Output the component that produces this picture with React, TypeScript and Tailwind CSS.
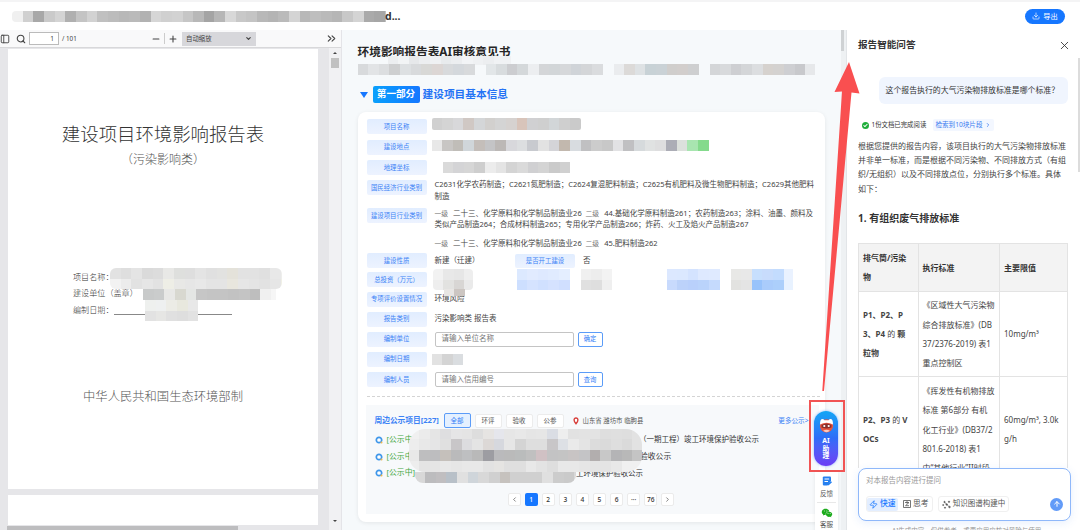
import { Check, ChevronRight, ChevronDown, ChevronsRight, ArrowUp, Download, Minus, PanelLeft, Plus, Search, X, Zap } from "lucide-react";
import { AiFillWechat } from "react-icons/ai";
import type { ReactNode } from "react";

// Cada franja es una lista de colores; "-" deja la celda transparente.
function Mosaic({ rows, className = "" }: { rows: string[]; className?: string }) {
  return (
    <div className={`flex flex-col overflow-hidden ${className}`}>
      {rows.map((row, i) => (
        <div key={i} className="flex flex-1">
          {row.split(" ").map((c, j) => (
            <span key={j} className="w-[10.67px] shrink-0" style={{ background: c === "-" ? "transparent" : `#${c}` }} />
          ))}
        </div>
      ))}
    </div>
  );
}

function TopBar() {
  return (
    <header className="flex h-[30px] shrink-0 items-center justify-between border-t-2 border-[#f4f4f5] bg-white pr-[15px] pl-[12px]">
      <div className="flex items-center">
        <Mosaic
          className="h-[11px] w-[374px] rounded-l"
          rows={["f0f0f0 d0d0d0 a8a8a8 cacaca d4d4d4 b0b0b0 c4c4c4 d2d2d2 c0c0c0 bcbcbc b8b8b8 bababa b2b2b2 d6d6d6 d0d0d0 d2d2d2 c6c6c6 b8b8b8 a4a4a4 b6b6b6 d8d8d8 c8c8c8 c4c4c4 b8b8b8 b4b4b4 bababa d4d4d4 b8b8b8 bebebe bababa b6b6b6 c8c8c8 d4d4d4 aaaaaa a6a6a6 c0c0c0"]}
        />
        <span className="-ml-px text-[10.5px] leading-[11px] font-bold">d...</span>
      </div>
      <button className="flex h-[15px] w-[40px] items-center justify-center gap-[3px] rounded-full bg-[#1677ff] text-[7.3px] text-white">
        <Download size={8} />
        导出
      </button>
    </header>
  );
}

function PdfViewer() {
  return (
    <section className="flex w-[342px] shrink-0 flex-col border-r border-[#e4e4e8]">
      <div className="flex h-[18px] shrink-0 items-center border-b border-[#d8d8da] bg-[#f9f9fa] text-[#444]">
        <PanelLeft size={10} strokeWidth={2.2} />
        <Search size={10} className="ml-[6px]" strokeWidth={2.6} />
        <span className="ml-[3px] flex h-[13px] w-[30px] items-center justify-end border border-[#bbb] bg-white pr-1 text-[6.5px]">1</span>
        <span className="ml-[3px] w-[89px] text-[6.3px]">/ 101</span>
        <Minus size={10} strokeWidth={2.6} />
        <span className="mx-[3px] h-[11px] w-px bg-[#ccc]" />
        <Plus size={10} strokeWidth={2.6} />
        <span className="ml-[4px] flex h-[14px] w-[74px] items-center justify-between bg-[#d7d7db] pr-1 pl-1 text-[6.4px]">
          自动缩放
          <ChevronDown size={7} strokeWidth={4} />
        </span>
        <ChevronsRight size={13} className="mr-[3px] ml-auto" />
      </div>
      <div className="flex min-h-0 flex-1">
        <div className="flex w-[329px] flex-col bg-[#e6e6e9]">
          <div className="mx-[8px] mt-[1px] flex h-[440px] w-[310px] shrink-0 flex-col bg-white font-light text-[#333]">
            <h1 className="mt-[71px] text-center text-[18.4px] leading-[28px]">建设项目环境影响报告表</h1>
            <p className="mt-[3px] text-center text-[12px] leading-[18px] text-[#555]">（污染影响类）</p>
            <div className="relative mt-[100px] ml-[65px] text-[8.1px] leading-[16.3px]">
              <p>项目名称：</p>
              <p>建设单位（盖章）</p>
              <p className="flex">
                编制日期：
                <span className="mb-[3px] ml-px w-[118px] border-b border-[#888]" />
              </p>
              <Mosaic
                className="absolute top-[-1px] left-[37px] h-[21px] w-[172px] rounded-md"
                rows={[
                  "e2e2e2 dedede e4e4e4 dadada dcdcdc e8e8e6 dedfdd dedede e4e4e4 e0e0e0 e2e2e0 e4e2da e2e2e2 e2e2e2 e0e0e0 e8e8e8 eeeeec",
                  "f2f2f2 ececec e2e2e2 e6e6e6 e2e2e2 eeeee6 e8e8e6 e6e6e6 e8e8e8 e4e4e4 e4e4e4 e8e6de e6e6e6 e4e4e4 e2e2e2 e6e6e6 f0f0e6",
                ]}
              />
              <Mosaic className="absolute top-[20px] left-[70px] h-[11px] w-[133px]" rows={["c8caca cacccc e8e8e6 d8d8d0 e4e6e4 c6c6c6 c4c4c4 c4c4c4 c2c2c2 c4c4c4 bebebe f0f0f0 f6f6f6"]} />
              <Mosaic className="absolute top-[31px] left-[72px] h-[21px] w-[54px]" rows={["eef0ee eef0f0 ecece6 e8e8de e8e8e8", "e2e2e2 e6e6e4 e0e0e0 dedede e2e2e2"]} />
            </div>
            <p className="mt-[69.5px] text-center text-[12.3px] leading-[20px] text-[#555]">中华人民共和国生态环境部制</p>
          </div>
          <div className="mx-[8px] mt-[6px] h-[31px] w-[310px] bg-white" />
          <div className="mt-px ml-[7px] h-[4px] w-[231px] bg-[#bdbdbf]" />
        </div>
        <div className="flex flex-1 flex-col items-center bg-[#f1f1f3] py-[4px]">
          <span className="border-x-2 border-b-2 border-x-transparent border-b-[#444]" />
          <span className="mt-[4px] h-[10px] w-[8px] bg-[#c1c1c1]" />
          <span className="mt-auto mb-[4px] border-x-2 border-t-2 border-x-transparent border-t-[#444]" />
        </div>
      </div>
    </section>
  );
}

function Label({ children, className = "h-[15px]" }: { children: ReactNode; className?: string }) {
  return (
    <span className={`flex w-[60px] shrink-0 items-center justify-center rounded-[2px] bg-linear-to-b from-[#e1edff] to-[#edf3ff] text-[6.4px] text-[#3b82f6] ${className}`}>
      {children}
    </span>
  );
}

function Row({ label, h, align = "items-center", children }: { label: string; h: string; align?: string; children?: ReactNode }) {
  return (
    <div className={`flex shrink-0 ${align} ${h}`}>
      <Label>{label}</Label>
      <div className="ml-[8px] text-[7.5px] whitespace-nowrap text-[#444]">{children}</div>
    </div>
  );
}

function Field({ placeholder, action }: { placeholder: string; action: string }) {
  return (
    <div className="flex items-center gap-[4px]">
      <span className="flex h-[15px] w-[139px] items-center rounded-[2px] border border-[#c4c4c4] pl-[6px] text-[7.5px] text-[#777]">{placeholder}</span>
      <span className="flex h-[15px] w-[25px] items-center justify-center rounded-[2px] border border-[#5b9cf8] text-[6.3px] text-[#2f7cf6]">{action}</span>
    </div>
  );
}

function Level({ children }: { children: string }) {
  return <span className="mr-[5px] text-[6.8px] text-[#777]">{children}</span>;
}

const TABS = ["环评", "验收", "公参"];
const PAGES = ["2", "3", "4", "5", "6", "···", "76"];
const NOTICES = [
  { text: "（一期工程）竣工环境保护验收公示", pos: "ml-[224px] text-[7.5px]" },
  { text: "验收公示", pos: "ml-[225px]" },
  { text: "工环境保护验收公示", pos: "ml-[161px] text-[7.45px]" },
];

function NearbyProjects() {
  return (
    <div className="relative mt-[8px] ml-[-1px] h-[109px] w-[453px] bg-[#f7f9fb] pt-[8.5px] pl-[9px]">
      <div className="flex h-[15px] items-center text-[6.5px] text-[#555]">
        <span className="w-[69px] text-[7.7px] font-bold whitespace-nowrap text-[#3b82f6]">周边公示项目[227]</span>
        <span className="flex h-[15px] w-[27px] items-center justify-center rounded-[2px] border border-[#5b9cf8] bg-[#e4f0ff] text-[#2f7cf6]">全部</span>
        {TABS.map((t) => (
          <span key={t} className="ml-[4px] flex h-[14px] w-[27px] items-center justify-center rounded-[2px] border border-[#ececec] bg-white">
            {t}
          </span>
        ))}
        <svg width="6" height="8" viewBox="0 0 6 8" className="ml-[9px]">
          <path d="M3 1A1.900 1.900 0 0 1 4.900 3C4.900 4.500 3 6.700 3 6.700S1.100 4.500 1.100 3A1.900 1.900 0 0 1 3 1Z" fill="#fff" stroke="#d8403c" strokeWidth="1.400" />
        </svg>
        <span className="ml-[4px] text-[6.4px] whitespace-nowrap">山东省 潍坊市 临朐县</span>
        <span className="mr-[10px] ml-auto text-[6.6px] text-[#3b82f6]">更多公示&gt;</span>
      </div>
      <div className="mt-[3.5px] flex flex-col text-[7.8px]">
        {NOTICES.map(({ text, pos }) => (
          <div key={text} className="flex h-[16.7px] items-center whitespace-nowrap">
            <svg width="8" height="8" viewBox="0 0 8 8">
              <circle cx="4" cy="4" r="2.700" fill="#fff" stroke="#3f97ea" strokeWidth="1.700" />
              <circle cx="6.500" cy="6.500" r="1" fill="#f0b84a" />
            </svg>
            <span className="ml-[4px] text-[#43a843]">[公示中]</span>
            <span className={pos}>{text}</span>
          </div>
        ))}
      </div>
      <Mosaic
        className="absolute top-[24px] left-[43px] h-[43px] w-[233px] rounded-2xl"
        rows={[
          "f0f0f0 ebebeb e5e5e5 dedee0 e5e5e6 e4e4e4 dddddd e6e4e2 e5e6ec e6e6e6 e8e8e8 e5e5e5 e6e6e6 dadde4 eeeeee e2e2e2 e3e3e3 e3e3e3 dedede dfdfdf dedede e2e2e2",
          "ededed e8e8e8 e5e5e6 e0e0e0 c8c6c8 dcdcdf e4e4e4 dcd8d6 d6d8de e6e6e6 d4d4d4 dedede dedede c8c6c8 dde0e5 eaeaea e4e4e4 dcdcdc dadada dedede dadada e2e2e2",
          "e8e8e8 bebebf bdbdbf c5c0bb bababb bebfc1 b9b9b9 9d9da2 bababc bababa babcbc c0c0c0 d0c1c4 c3c3c4 c4c4c4 c8c4c4 c4c4c6 b2aeae c8c8c8 b4b4b6 b8b8b8 c4c4c4",
          "ededed e4e4e4 e5e5e5 e8e8e8 e6e6e6 e8e8e8 e8e8e8 e2e2e2 e5e4e2 dfdfdf dfdfdf e8e8e8 e3e3e3 dedede e8e8e8 e8e8e8 e6e6e6 e4e4e4 e4e4e4 e8e8e8 f0f0f0 f0f0f0",
        ]}
      />
      <Mosaic className="absolute top-[67px] left-[49px] h-[11px] w-[161px] rounded-b-lg" rows={["d8d8d8 bcbcbe c0bec0 b8c0c8 e0e0e0 cfd5da d8d8d8 d0d0d0 c6c2be d0d0d0 d0d0d0 d0d0d0 e0e0e0 cccccc cacaca d8d8d8"]} />
      <div className="mt-[11.5px] ml-[133px] flex h-[13px] gap-[4.1px] text-[6.6px] font-medium">
        <span className="flex w-[13px] items-center justify-center rounded-[2px] border border-[#ebebeb] bg-white">
          <ChevronRight size={7} className="rotate-180" />
        </span>
        <span className="flex w-[13px] items-center justify-center rounded-[2px] bg-[#1677ff] text-white">1</span>
        {PAGES.map((p) => (
          <span key={p} className="flex w-[13px] items-center justify-center rounded-[2px] border border-[#ebebeb] bg-white">
            {p}
          </span>
        ))}
        <span className="flex w-[13px] items-center justify-center rounded-[2px] border border-[#ebebeb] bg-white">
          <ChevronRight size={7} />
        </span>
      </div>
    </div>
  );
}

function Review() {
  return (
    <section className="flex w-[499px] shrink-0 flex-col bg-[#f6f9fb] pl-[15.5px]">
      <div className="relative mt-[12px] h-[34px]">
        <h2 className="text-[11.7px] leading-[18px] font-bold whitespace-nowrap text-[#262626]">环境影响报告表AI审核意见书</h2>
        <Mosaic className="absolute top-[14px] left-[30px] h-[9px] w-[123px]" rows={["eceef0 f2f4f5 e6e8ea eceef0 eff1f3 e8ebed eceef0 f2f4f6 eff1f3 eceef0 f0f2f4 f0f2f4"]} />
        <div className="absolute top-[22px] left-0 flex">
          <Mosaic className="h-[11px] w-[117px]" rows={["d8dadc e2e4e6 dcdee0 cecfd0 dde0e2 d8dadc d8d8d6 dcd6d4 d8dadc d4d8dc d8dadc"]} />
          <Mosaic className="ml-[11px] h-[11px] w-[117px]" rows={["e2e6e8 d8dcde cccdd0 d4d8da eceef0 d4d6d8 d2d6d8 d6d8da d0d4d8 d4d6d8 dadcde"]} />
          <Mosaic className="ml-[11px] h-[11px] w-[85px]" rows={["eaecee dcdad8 dee2e4 c8d2d6 cad2d6 d0cecc d2cecc cecfd0"]} />
          <Mosaic className="ml-[11px] h-[11px] w-[105px]" rows={["d4d6d8 d8dadc cecfd2 d4d6d8 dcdee0 d6d2ce d4d2d0 cecfd2 c8c9cc e6e8ea"]} />
        </div>
      </div>
      <div className="mt-[10px] flex h-[17px] items-center">
        <span className="ml-[2.5px] border-x-[4px] border-t-[6px] border-x-transparent border-t-[#1677ff]" />
        <span className="ml-[4.5px] flex h-[17px] w-[47px] items-center justify-center rounded-[2px] bg-linear-to-r from-[#0ba0fc] to-[#1677ff] text-[9.6px] font-bold text-white">第一部分</span>
        <span className="ml-[3px] text-[10.7px] font-bold text-[#2473f5]">建设项目基本信息</span>
      </div>
      <div className="mt-[9px] flex h-[410px] w-[467px] flex-col rounded-lg bg-white pt-[4.5px] pl-[9px] shadow-[0_1px_4px_rgba(0,0,0,0.08)]">
        <Row label="项目名称" h="h-[20.5px]">
          <Mosaic className="mb-[6px] ml-[-3px] h-[12px] w-[149px] rounded-xs" rows={["d0d0d0 d4d4d4 d8d8da d0c8c4 d4d6d8 d2d0ce d4d4d4 d6d2d0 d8c4ba d0d0d2 cfcfcf d2d6d8 cfcfcf cacaca"]} />
        </Row>
        <Row label="建设地点" h="h-[20.5px]">
          <Mosaic className="mb-[3px] ml-[-3px] h-[11px] w-[278px]" rows={["e8e8e8 c8c6c4 c0bdb8 d0d6da c4beba c4c4c6 bcb8b6 d8d8dc dcdee0 c8cacf e2e2e2 d4d4d8 c2b8ae d8dce0 c0c0c2 cccccc c8c8c8 e2e2e4 c0c0c2 d6dadc e0e2e2 dededf acadb6 dce0dc a8e5b0 84da8c"]} />
        </Row>
        <Row label="地理坐标" h="h-[20px]">
          <Mosaic className="ml-[8px] h-[11px] w-[128px]" rows={["dadada d4d4d6 d6d6d6 cecece ececec e4e4e4 d4d4d4 dadada d0d0d2 d4d4d4 cacaca d0d0d0"]} />
        </Row>
        <Row label="国民经济行业类别" h="h-[28.5px]" align="items-start pt-[2.5px]">
          <p className="-mt-[2px] leading-[12px]">C2631化学农药制造；C2621氮肥制造；C2624复混肥料制造；C2625有机肥料及微生物肥料制造；C2629其他肥料</p>
          <p className="leading-[12px]">制造</p>
        </Row>
        <Row label="建设项目行业类别" h="h-[45px]" align="items-start pt-[2px]">
          <p className="-mt-[0.5px] leading-[11.5px]">
            <Level>一级</Level>二十三、化学原料和化学制品制造业26&nbsp; <Level>二级</Level>44.基础化学原料制造261；农药制造263；涂料、油墨、颜料及
          </p>
          <p className="leading-[11.5px]">类似产品制造264；合成材料制造265；专用化学产品制造266；炸药、火工及焰火产品制造267</p>
          <p className="mt-[7px] leading-[11px]">
            <Level>一级</Level>二十三、化学原料和化学制品制造业26&nbsp; <Level>二级</Level>45.肥料制造262
          </p>
        </Row>
        <Row label="建设性质" h="h-[19px]">
          <div className="flex items-center">
            <span className="w-[80.5px]">新建（迁建）</span>
            <Label className="h-[14px]">是否开工建设</Label>
            <span className="ml-[8px]">否</span>
          </div>
        </Row>
        <Row label="总投资（万元）" h="h-[19px]">
          <div className="relative z-10 flex h-[21px] w-[360px] items-center">
            <Mosaic className="ml-[-2px] h-[21px] w-[40px] rounded-sm" rows={["f2f2f2 e8e8e8 e6e6e6 eeeeee", "eeeeee e2e2e0 d8d6d4 eaeaea"]} />
            <Mosaic className="ml-[44px] h-[21px] w-[54px]" rows={["dce9ff e1ebff dee9ff e0ebff e4eeff", "cddfff d5e3ff d0e0ff d5e2ff d0dfff"]} />
            <Mosaic className="ml-[10px] h-[21px] w-[32px]" rows={["f0f0f0 ededed f3f3f3", "e0e0e0 dedede efefef"]} />
            <Mosaic className="ml-[54px] h-[21px] w-[54px]" rows={["dce8ff dbe8ff d4e3ff dee9ff dfeaff", "c8dafd bcd2fa b9d0fb bad3fb c5dafd"]} />
            <Mosaic className="ml-[10px] h-[21px] w-[62px]" rows={["e8e8e6 e8e8e8 c7dffd c8dcfc c3dcfe eaf2ff", "e2e2e0 e4e4e4 98c3fb aaccfb accffb e8f2ff"]} />
            <Mosaic className="absolute top-[20px] left-[9px] h-[7px] w-[22px]" rows={["e8e6e4 ccc6c2"]} />
          </div>
        </Row>
        <Row label="专项评价设置情况" h="h-[20px]">环境风险</Row>
        <Row label="报告类别" h="h-[20px]">污染影响类 报告表</Row>
        <Row label="编制单位" h="h-[20px]">
          <Field placeholder="请输入单位名称" action="确定" />
        </Row>
        <Row label="编制日期" h="h-[20.5px]">
          <Mosaic className="ml-[-3px] h-[11px] w-[32px]" rows={["e2e2e2 d4d4d4 dadde0"]} />
        </Row>
        <Row label="编制人员" h="h-[20px]">
          <Field placeholder="请输入信用编号" action="查询" />
        </Row>
        <div className="mt-[6px] w-[453px] border-t border-dashed border-[#d4d4d4]" />
        <NearbyProjects />
      </div>
    </section>
  );
}

function SideTools() {
  return (
    <div className="absolute top-[400px] left-[809px] w-[36px]">
      <div className="flex h-[72px] justify-center border-2 border-[#f15454] pt-[9px] pr-[2px]">
        <div className="flex h-[55px] w-[24px] flex-col items-center rounded-full bg-linear-to-b from-[#14a5f5] via-[#2f6cf8] to-[#6a3df5] pt-[7px] text-[6.8px] leading-[7.6px] font-bold text-white shadow-[0_0_3px_#8fb4ff]">
          <svg width="15" height="15" viewBox="0 0 15 15" className="mb-[4px]">
            <circle cx="7.500" cy="7.800" r="6.600" fill="#e9553f" />
            <path d="M1 6.500Q1 0 4.500 1.200L5.500 2.200H9.500L10.500 1.200Q14 0 14 6.500Q7.500 3 1 6.500Z" fill="#fff" />
            <path d="M2.500 7Q7.500 4 12.500 7V9.500Q7.500 11.500 2.500 9.500Z" fill="#8c2f2c" />
            <circle cx="5.300" cy="8" r="1.100" fill="#fff" />
            <circle cx="9.700" cy="8" r="1.100" fill="#fff" />
            <path d="M4 12.800Q7.500 10.800 11 12.800Q7.500 15.500 4 12.800Z" fill="#ffc9bc" />
          </svg>
          <span>AI</span>
          <span>助</span>
          <span>理</span>
        </div>
      </div>
      <div className="ml-[6px] flex w-[23px] flex-col items-center bg-white pt-[4px] pb-2 text-[6.6px] text-[#555] shadow-[0_1px_4px_rgba(0,0,0,0.08)]">
        <svg width="10" height="10" viewBox="0 0 10 10">
          <path d="M2 0.500H8Q9 0.500 9 1.500V5L5.500 9.500H2Q0.800 9.500 0.800 8.500V1.500Q0.800 0.500 2 0.500Z" fill="#2680f0" />
          <path d="M2.500 3H7.200M2.500 5.500H6" stroke="#fff" />
          <path d="M6 9L9.500 5.800" stroke="#2680f0" strokeWidth="1.500" />
        </svg>
        <span className="mt-[4px] leading-[8px]">反馈</span>
        <span className="mt-[4px] h-px w-[19px] bg-[#e8e8e8]" />
        <AiFillWechat size={12} className="mt-[4px] text-[#1cab1c]" />
        <span className="mt-[2px] leading-[8px]">客服</span>
      </div>
    </div>
  );
}

function ChatPanel() {
  return (
    <aside className="relative flex w-[233px] shrink-0 flex-col bg-white pl-[11px] text-[8px]">
      <div className="flex h-[31px] items-center justify-between pr-[9px]">
        <h3 className="text-[9.6px] font-bold text-[#333]">报告智能问答</h3>
        <X size={13} strokeWidth={1.6} />
      </div>
      <div className="min-h-0 flex-1 overflow-hidden">
        <p className="mt-[16px] ml-[20.5px] flex h-[27px] w-[189px] items-center rounded-md bg-[#f0f5fe] pl-[7px] text-[7.9px] whitespace-nowrap">
          这个报告执行的大气污染物排放标准是哪个标准？
        </p>
        <div className="mt-[14.5px] flex h-[13px] items-center text-[6.4px] whitespace-nowrap">
          <span className="ml-[4px] flex h-[7px] w-[7px] items-center justify-center rounded-full bg-[#1fae3b] text-white">
            <Check size={5} strokeWidth={5} />
          </span>
          <span className="ml-[2.5px] w-[61px]">1份文档已完成阅读</span>
          <span className="flex h-[12px] w-[61px] items-center justify-center gap-[2px] rounded-[2px] bg-[#f3f7ff] text-[6.6px] text-[#3b7cf0]">
            检索到10块片段
            <ChevronRight size={6} strokeWidth={3} />
          </span>
        </div>
        <p className="mt-[7px] w-[212px] leading-[14.4px] whitespace-nowrap text-[#444]">
          根据您提供的报告内容，该项目执行的大气污染物排放标准
          <br />
          并非单一标准，而是根据不同污染物、不同排放方式（有组
          <br />
          织/无组织）以及不同排放点位，分别执行多个标准。具体
          <br />
          如下：
        </p>
        <h4 className="mt-[14px] text-[10px] leading-[16px] font-bold">1. 有组织废气排放标准</h4>
        <table className="mt-[17px] w-[210px] table-fixed border-collapse text-left leading-[19.2px]">
          <thead className="bg-[#f3f3f3]">
            <tr className="h-[47.5px]">
              <th className="w-[59.5px] border border-[#e3e3e3] pl-[4px]">排气筒/污染<br />物</th>
              <th className="w-[81.5px] border border-[#e3e3e3] pl-[4px]">执行标准</th>
              <th className="border border-[#e3e3e3] pl-[4px]">主要限值</th>
            </tr>
          </thead>
          <tbody className="whitespace-nowrap text-[#444]">
            <tr className="h-[85.5px]">
              <td className="border border-[#e3e3e3] pl-[4px]">
                <b>P1、P2、P<br />3、P4</b> 的 <b>颗<br />粒物</b>
              </td>
              <td className="border border-[#e3e3e3] pl-[4px]">《区域性大气污染物<br />综合排放标准》(DB<br />37/2376-2019) 表1<br />重点控制区</td>
              <td className="border border-[#e3e3e3] pl-[4px]">10mg/m³</td>
            </tr>
            <tr className="h-[105px]">
              <td className="border border-[#e3e3e3] pl-[4px]">
                <b>P2、P3</b> 的 <b>V<br />OCs</b>
              </td>
              <td className="border border-[#e3e3e3] pl-[4px]">《挥发性有机物排放<br />标准 第6部分 有机<br />化工行业》(DB37/2<br />801.6-2018) 表1<br />中“其他行业”II时段</td>
              <td className="border border-[#e3e3e3] pl-[4px]">60mg/m³, 3.0k<br />g/h</td>
            </tr>
          </tbody>
        </table>
      </div>
      <div className="flex h-[53px] w-[213px] shrink-0 flex-col rounded-lg border border-[#8fb8fa] bg-white px-[7px] pt-[6px] shadow-[0_2px_8px_rgba(60,120,240,0.12)]">
        <p className="text-[7.5px] leading-[11px] text-[#999]">对本报告内容进行提问</p>
        <div className="mt-[10px] flex items-center text-[7.8px] text-[#555]">
          <div className="flex h-[16px] w-[67px] items-center rounded-[3px] border border-[#f0f0f0]">
            <span className="flex h-[13px] w-[31px] items-center gap-[2px] rounded-[2px] bg-[#e3eeff] pl-[2px] font-medium text-[#1677ff]">
              <Zap size={9} />
              快速
            </span>
            <span className="ml-[5px] flex items-center gap-[2px]">
              <svg width="8" height="8" viewBox="0 0 8 8" fill="none" stroke="#555" strokeWidth="0.800">
                <rect x="0.600" y="0.600" width="6.800" height="6.800" />
                <path d="M2 2.500H6L2.500 5.700H6M4 1V3.500" />
              </svg>
              思考
            </span>
          </div>
          <span className="ml-[5px] flex h-[16px] w-[71px] items-center justify-center gap-[2px] rounded-[3px] border border-[#f0f0f0] text-[7.5px] whitespace-nowrap">
            <svg width="9" height="9" viewBox="0 0 9 9" fill="#555" stroke="#555" strokeWidth="0.600">
              <circle cx="2.500" cy="2" r="0.700" />
              <circle cx="7" cy="1.800" r="0.700" />
              <circle cx="1.200" cy="5" r="0.600" />
              <circle cx="4.700" cy="4.500" r="0.800" />
              <circle cx="3" cy="7.700" r="0.600" />
              <circle cx="7.500" cy="7" r="0.800" />
              <path d="M2.500 2L4.700 4.500L7.500 7" fill="none" />
            </svg>
            知识图谱构建中
          </span>
          <span className="ml-auto flex h-[13px] w-[13px] items-center justify-center rounded-full bg-[#629bf8] text-white">
            <ArrowUp size={8} strokeWidth={3} />
          </span>
        </div>
      </div>
      <p className="h-[9px] shrink-0 overflow-hidden pt-[5px] pl-[34px] text-[6.5px] leading-[9px] whitespace-nowrap text-[#999]">AI生成内容，仅供参考，重要应用应核对风险与使用</p>
      <span className="absolute top-[28px] right-0 h-[114px] w-[2px] bg-[#dcdcdc]" />
    </aside>
  );
}

export default function App() {
  return (
    <div className="relative flex h-[530px] w-[1080px] flex-col overflow-hidden bg-white font-['Noto_Sans','Noto_Sans_CJK_SC',sans-serif] text-[#333]">
      <TopBar />
      <main className="flex min-h-0 flex-1">
        <PdfViewer />
        <Review />
        <div className="w-[6px] shrink-0 border-r border-[#e2e5e8] bg-[#eef1f3]">
          <div className="h-[21px] w-[3px] bg-[#cfd2d4]" />
        </div>
        <ChatPanel />
      </main>
      <SideTools />
      <svg className="absolute top-[60px] left-[815px]" width="46" height="334" viewBox="0 0 46 334">
        <path d="M34 2L44.500 33.500L36.500 32.500L9 331H7.300L27 31.500L19.500 32Z" fill="#f94f50" />
      </svg>
    </div>
  );
}
